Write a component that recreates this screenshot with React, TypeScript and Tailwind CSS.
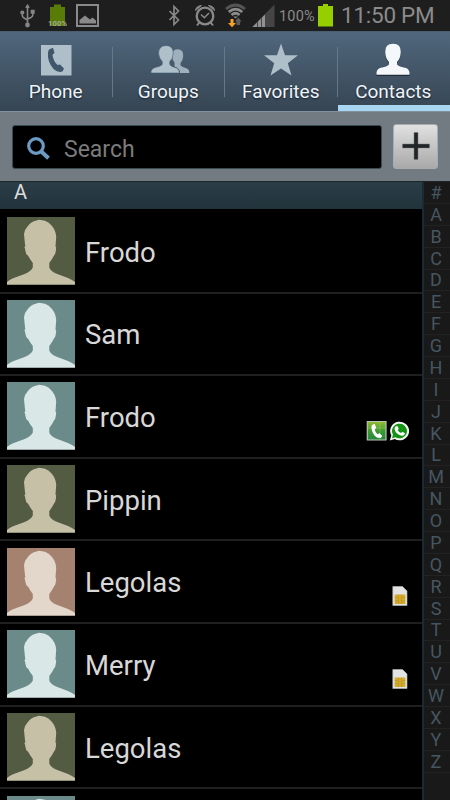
import clsx from "clsx";
import { ReactNode } from "react";

type Tone = "olive" | "teal" | "rose";

interface Contact {
  name: string;
  tone: Tone;
  badge?: "phone" | "sim";
}

const contacts: Contact[] = [
  { name: "Frodo", tone: "olive" },
  { name: "Sam", tone: "teal" },
  { name: "Frodo", tone: "teal", badge: "phone" },
  { name: "Pippin", tone: "olive" },
  { name: "Legolas", tone: "rose", badge: "sim" },
  { name: "Merry", tone: "teal", badge: "sim" },
  { name: "Legolas", tone: "olive" },
  { name: "", tone: "teal" },
];

const letters = "#ABCDEFGHIJKLMNOPQRSTUVWXYZ".split("");

const tones = {
  olive: "bg-[#545b43] text-[#c5c0a6]",
  teal: "bg-[#6b8a8a] text-[#d9e7e7]",
  rose: "bg-[#a58270] text-[#e3d6ca]",
};

function Avatar({ tone }: { tone: Tone }) {
  return (
    <svg viewBox="0 0 68 68" className={clsx("size-[68px] shrink-0", tones[tone])}>
      <path
        fill="currentColor"
        d="M0 68V65Q3 62.500 6 61.300L17 57.300Q24.500 54 25.800 50.500V46Q23 42.500 21 38.500Q18.800 38 18 31.500L17.300 30L18.300 29.500Q17.800 26 17 17Q17.500 12.500 20.500 9.500Q24 4.500 29.500 3.600L32 2.700L38 3.700Q42 5 45 9Q49 14 49.200 20L48.500 29.500L49.200 30.500Q48.800 37 47 38.500Q45 42.500 42.300 46V50.500Q43.500 54 49 56.500L61 61Q65.500 63 68 65V68Z"
      />
      <path d="M0 67.500H68" stroke="#000" strokeOpacity=".25" />
    </svg>
  );
}

function StatusBar() {
  return (
    <div className="flex h-[31px] shrink-0 items-start bg-[#1e1e1e] text-[#8b8b8b]">
      <svg width="278" height="31" className="shrink-0">
        {/* usb */}
        <g stroke="#858585" strokeWidth="1.600" fill="none">
          <path d="M27.500 6V25M22.300 13V15.500Q22.300 17 24 18L27.500 20M32.800 12V15Q32.800 16.500 31 17.500L27.500 19" />
          <circle cx="22.300" cy="12.500" r="1.300" fill="#858585" />
          <circle cx="27.500" cy="25" r="1.600" fill="#858585" />
          <path d="M31.500 10.500h2.400v2.400h-2.400z" fill="#858585" />
          <path d="M25.800 7.500L27.500 4.500L29.200 7.500Z" fill="#858585" strokeWidth="1" />
        </g>
        {/* battery */}
        <path d="M50 7h4V4.500h7V7h4v19H50z" fill="#597b08" />
        <text x="48" y="26.300" fontSize="7.500" fontWeight="700" textLength="19" fill="#a3aa92" fontFamily="Roboto, sans-serif">
          100%
        </text>
        {/* picture */}
        <path d="M77 5h21v21H77z" fill="none" stroke="#8a8a8a" strokeWidth="2" />
        <path d="M79.500 23.500V20L85 15.500L90 19.500L92.500 17.500L96 20.500V23.500Z" fill="#8a8a8a" />
        {/* bluetooth */}
        <path d="M169.500 11L178.500 20L174 24.500V6.500L178.500 11L169.500 20" fill="none" stroke="#888" strokeWidth="1.700" />
        {/* alarm */}
        <g fill="none" stroke="#898989">
          <circle cx="205" cy="16" r="8.300" strokeWidth="2.300" />
          <path d="M201 14.500L204.300 17.700L209 13" strokeWidth="1.500" />
          <path d="M199.300 22.500L197 25.500M210.700 22.500L213 25.500" strokeWidth="2" />
          <path d="M195.500 10.500Q196 6 201.500 5.500Z M214.500 10.500Q214 6 208.500 5.500Z" fill="#898989" />
        </g>
        {/* wifi */}
        <g fill="none" strokeWidth="2.700">
          <path d="M226 9Q235.500 1 245 9" stroke="#555" />
          <path d="M228.700 12Q235.500 6.200 242.300 12" stroke="#8b8b8b" />
          <path d="M231.500 15Q235.500 11.500 239.500 15" stroke="#8b8b8b" />
          <path d="M233.300 16.500h4.500l-2.200 2z" fill="#8b8b8b" stroke="none" />
        </g>
        <path d="M230.500 19h3v4h2.500l-4 4.300l-4-4.300h2.500z" fill="#f7a12d" />
        <path d="M236.500 25v-3.500h-1.500l3.300-4l3.300 4h-1.500V25z" fill="#5c5c5c" />
        {/* signal */}
        <path d="M274.500 4.500V27H252Z" fill="#454545" />
        <path d="M252.500 27L257 22.500V27ZM258 27V21.500L261 18.500V27ZM262 27V17.500L265 14.500V27Z" fill="#929292" />
      </svg>
      <span className="mt-[7px] w-10 pl-[1px] text-[14.500px] leading-5 tracking-[0.200px]">100%</span>
      <svg width="16" height="31" className="shrink-0">
        <path d="M0 6h5V4h5v2h5v20.500H0z" fill="#96cf00" />
      </svg>
      <span className="ml-[7px] text-[22.500px] leading-[31px] tracking-[-0.250px] whitespace-nowrap">11:50 PM</span>
    </div>
  );
}

interface TabProps {
  label: string;
  active?: boolean;
  last?: boolean;
  children: ReactNode;
}

function Tab({ label, active, last, children }: TabProps) {
  return (
    <div
      className={clsx(
        "relative flex flex-1 flex-col items-center pt-[11px] pr-px text-[#f0f4f8]",
        active && "border-b-[6px] border-[#a9d6f2]"
      )}
    >
      <svg viewBox="0 0 40 34" className="h-[34px] w-10 shrink-0 overflow-visible">
        {children}
      </svg>
      <span className="mt-[3px] text-[19px] leading-6 [text-shadow:0_1px_2px_#14202b]">{label}</span>
      {!last && <i className="absolute top-[15px] right-0 h-[50px] w-px bg-[#667888]" />}
    </div>
  );
}

function Tabs() {
  return (
    <div className="flex h-20 shrink-0 border-t border-[#4b5e70] bg-linear-to-b from-[#50677d] to-[#364553]">
      <Tab label="Phone">
        <path d="M5 2h30.500v30.500H5z" fill="#afbfca" />
        <path
          d="M13 6.500L17 4.800L18.500 9.800L16.500 12Q17.500 18.500 21.500 22L24 21.500L28 25.500L26.500 28.500Q21.500 30 17.500 26Q11 18.500 12 9Z"
          fill="#40566a"
        />
      </Tab>
      <Tab label="Groups">
        <path
          d="M25 13Q25 6.500 30.500 6.300Q36.500 6.500 36.200 13Q36 17.500 33.500 20V22.500Q35 24 40 25.500Q42.500 26.500 42.300 30H33Q33.500 26 27.500 23.500V19.500Q25.500 17.500 25 13Z"
          fill="#9fb0bd"
          transform="translate(-1 0)"
        />
        <path
          d="M10.500 10Q11 2.500 18 2.500Q25 2.500 25.300 10Q25 16 21.800 18.500V21.500Q23 23.500 28.500 25Q31.500 26.500 31.500 30H3Q2.500 26 7 24.500Q13 23.300 14.200 21.500V18.500Q11 15.500 10.500 10Z"
          fill="#afc0cb"
          stroke="#455b6e"
          strokeWidth=".6"
        />
      </Tab>
      <Tab label="Favorites">
        <path d="M20 .5L24 12.300H37L26.800 20.200L30.500 32.500L20 25.500L9.500 32.500L13.200 20.200L3 12.300H16Z" fill="#aebfca" />
      </Tab>
      <Tab label="Contacts" active last>
        <path
          d="M12.200 10Q12 1.500 20 1.500Q28 1.500 27.800 10Q27.500 16.500 24 20V22.500Q25.500 24.500 33 26Q37 27.500 36.500 33H3.500Q3 27.500 7 26Q14.500 24.500 16 22.500V20Q12.500 16.500 12.200 10Z"
          fill="#1f2d3a"
        />
        <path
          d="M12.200 9Q12 .8 20 .8Q28 .8 27.800 9Q27.500 15.500 24 19V21.500Q25.500 23.500 33 25Q37 26.500 36.500 31.700H3.500Q3 26.500 7 25Q14.500 23.500 16 21.500V19Q12.500 15.500 12.200 9Z"
          fill="#f5f8fa"
        />
      </Tab>
    </div>
  );
}

function SearchBar() {
  return (
    <div className="flex h-[70px] shrink-0 items-center border-t border-[#84909b] bg-[#737b82] pl-3">
      <div className="flex h-11 w-[370px] items-center rounded-[3px] border border-[#3a4a52] bg-black pl-[13px]">
        <svg width="26" height="26" viewBox="0 0 26 26" fill="none" stroke="#6b9ac4" className="mt-1">
          <circle cx="10" cy="10" r="7.300" strokeWidth="3.200" />
          <path d="M15 15.200L22.500 22.300" strokeWidth="4" />
        </svg>
        <span className="mt-[6px] ml-3 text-[23px] leading-7 text-[#7b7b7b]">Search</span>
      </div>
      <div className="ml-[11px] flex size-[45px] items-center justify-center rounded-[3px] border border-[#a9adb0] bg-linear-to-b from-[#e1e1e1] to-[#a9a9a9]">
        <svg width="28" height="28" viewBox="0 0 28 28" className="-mt-[2px]">
          <path d="M12 .5h4V12h11.500v4H16v11.500h-4V16H.5v-4H12z" fill="#222527" stroke="#73787b" strokeWidth=".5" />
        </svg>
      </div>
    </div>
  );
}

function PhoneBadges() {
  return (
    <svg width="44" height="22" viewBox="0 0 44 22" className="mr-[12px]">
      <defs>
        <linearGradient id="call" x2="0" y2="1">
          <stop stopColor="#96bd32" />
          <stop offset=".5" stopColor="#3c9a32" />
          <stop offset="1" stopColor="#23873a" />
        </linearGradient>
      </defs>
      <path d="M1.300 1.500h18.700V20H1.300z" fill="url(#call)" stroke="#b9c4b4" strokeWidth="1.200" />
      <path d="M14 2v18M2 8h17.500" stroke="#a6cf6a" strokeWidth=".4" />
      <path
        d="M5.500 5.500L8.500 3.700L10.300 7.800L8.700 9.500Q9.300 12.500 11.500 14.200L13.500 13.300L16.300 16L15 17.800Q11.500 19 8.500 15.500Q5 11 5.500 5.500Z"
        fill="#fff"
      />
      <path d="M23.800 20.500L25.300 15.500A9.500 9.300 0 1 1 28.800 19Z" fill="#f1f6f1" />
      <path d="M26 18.200L27 14.700A7.500 7.300 0 1 1 29.500 17.200Z" fill="#139414" />
      <path
        d="M29.500 6.500L31.500 6L32.700 8.800L31.700 10.200Q33 12.300 35 13L36.400 11.800L39 13.200Q38.500 16 35.500 15.700Q30 14.500 28.600 9.500Q28.400 7.500 29.500 6.500Z"
        fill="#fff"
      />
    </svg>
  );
}

function SimBadge() {
  return (
    <svg width="16" height="20" viewBox="0 0 16 20" className="mr-[14px]">
      <path d="M.8.500H10.500L15 5V19.500H.8Z" fill="#e3e3e3" stroke="#bbb" strokeWidth=".6" />
      <path d="M2.700 8.500H13.300V18H2.700Z" fill="#d3aa2c" />
      <path d="M2.700 11.500H6.500M2.700 15H6.500M9.500 11.500H13.300M9.500 15H13.300M6.500 8.500V18M9.500 8.500V18" stroke="#b58d20" strokeWidth=".5" />
    </svg>
  );
}

function ContactRow({ name, tone, badge }: Contact) {
  return (
    <div className="flex h-[82.650px] shrink-0 items-center border-b-2 border-[#1f1f1f] pl-[7px]">
      <Avatar tone={tone} />
      <span className="mt-[3px] ml-[10px] flex-1 text-[27.500px] leading-8 text-[#d8d8d8]">{name}</span>
      {badge && (
        <div className="mt-[29px]">{badge === "phone" ? <PhoneBadges /> : <SimBadge />}</div>
      )}
    </div>
  );
}

function App() {
  return (
    <div className="flex h-[800px] w-[450px] flex-col overflow-hidden bg-black font-['Roboto',sans-serif]">
      <StatusBar />
      <Tabs />
      <SearchBar />
      <div className="flex min-h-0 flex-1">
        <div className="flex w-[422px] flex-col">
          <div className="h-7 shrink-0 border-t border-[#1b2528] bg-linear-to-b from-[#2b3d47] to-[#22333c] pl-[14px] text-[20px] leading-5 text-[#dedede]">
            A
          </div>
          <div className="flex flex-col pt-[1.900px]">
            {contacts.map((contact, i) => (
              <ContactRow key={i} {...contact} />
            ))}
          </div>
        </div>
        <div className="flex flex-1 flex-col overflow-hidden border-t border-l-2 border-t-[#222] border-l-[#1c2a35] bg-[#191919] text-[#465660]">
          {letters.map((letter) => (
            <div
              key={letter}
              className="flex h-[21.880px] shrink-0 items-center justify-center border-b border-[#222] pt-px pr-[2px] text-[18px] leading-none"
            >
              {letter}
            </div>
          ))}
        </div>
      </div>
    </div>
  );
}

export default App;
